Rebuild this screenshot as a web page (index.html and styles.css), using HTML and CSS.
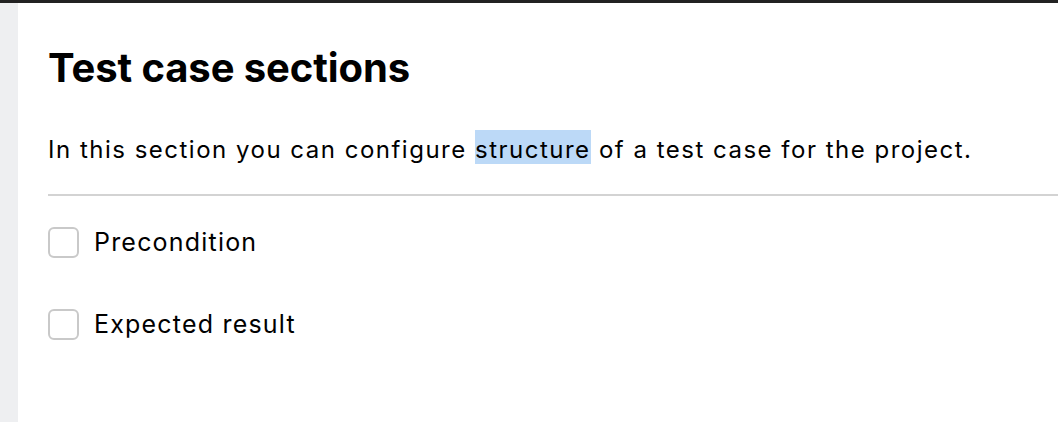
FILE: index.html
```html
<!DOCTYPE html>
<html>
<head>
<meta charset="utf-8">
<link rel="stylesheet" href="styles.css">
</head>
<body>
<div class="topbar"></div>
<div class="layout">
  <aside class="rail"></aside>
  <main class="content">
    <h1 class="title">Test case sections</h1>
    <p class="desc">In this section you can configure <span class="sel">structure</span> of a test case for the project.</p>
    <hr class="divider">
    <ul class="options">
      <li class="option"><span class="box"></span><span class="label">Precondition</span></li>
      <li class="option"><span class="box"></span><span class="label">Expected result</span></li>
    </ul>
  </main>
</div>
</body>
</html>
```
FILE: styles.css
```css
html, body {
  margin: 0;
  padding: 0;
  height: 100%;
  background: #fff;
}
body {
  font-family: Inter, "Noto Sans", sans-serif;
  color: #000;
  display: flex;
  flex-direction: column;
  overflow: hidden;
}
.topbar {
  height: 3px;
  background: #222;
  flex: none;
}
.layout {
  flex: 1;
  display: flex;
}
.rail {
  width: 18px;
  background: #eeeff1;
  flex: none;
}
.content {
  flex: 1;
  padding: 41px 0 0 30px;
}
.title {
  margin: 0;
  font-size: 40px;
  font-weight: 700;
  line-height: 48px;
  letter-spacing: -0.1px;
}
.desc {
  margin: 41px 0 0;
  font-size: 24px;
  line-height: 34px;
  letter-spacing: 1.5px;
}
.sel {
  background: #bcd9f7;
  padding-top: 5px;
}
.divider {
  margin: 27px 0 0;
  border: 0;
  border-top: 2px solid #d3d3d3;
}
.options {
  list-style: none;
  margin: 0;
  padding: 30px 0 0;
  display: flex;
  flex-direction: column;
  gap: 50px;
}
.option {
  display: flex;
  align-items: center;
  gap: 15px;
  height: 32px;
}
.box {
  width: 27px;
  height: 27px;
  border: 2px solid #c9c9c9;
  border-radius: 6px;
  flex: none;
}
.label {
  font-size: 25px;
  line-height: 32px;
  letter-spacing: 1.2px;
}
```
